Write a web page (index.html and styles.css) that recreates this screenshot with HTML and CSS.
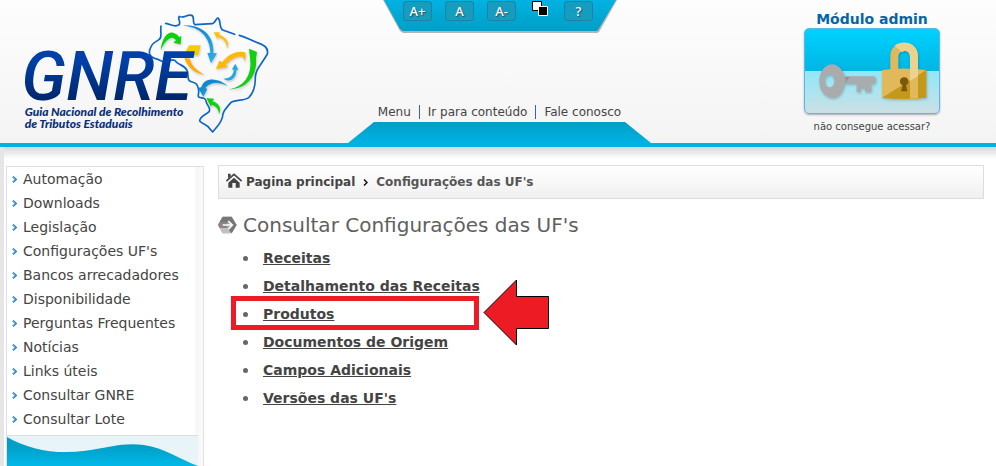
FILE: index.html
```html
<!DOCTYPE html>
<html lang="pt-BR">
<head>
  <meta charset="UTF-8" />
  <meta name="viewport" content="width=device-width, initial-scale=1.0"/>
  <title>GNRE - Configurações das UF's</title>
  <link rel="stylesheet" href="styles.css">
</head>
<body>
  <header class="header">
    <a class="logo" href="#" aria-label="GNRE">
      <svg width="280" height="140" viewBox="9 0 840 420">
        <defs>
          <linearGradient id="azul" x1="0" y1="0" x2="0" y2="1">
            <stop offset="0.3" stop-color="#0040a8"/>
            <stop offset="0.8" stop-color="#00256a"/>
          </linearGradient>
          <linearGradient id="ciano" x1="0" y1="0" x2="1" y2="1">
            <stop offset="0" stop-color="#0878c8"/>
            <stop offset="1" stop-color="#2bb5e8"/>
          </linearGradient>
          <linearGradient id="linha">
            <stop offset="0" stop-color="#1665b4" stop-opacity="0"/>
            <stop offset="0.5" stop-color="#1665b4"/>
            <stop offset="1" stop-color="#1665b4" stop-opacity="0"/>
          </linearGradient>
        </defs>
        <!-- mapa -->
        <g fill="none" stroke="#0d66c6" stroke-width="5" stroke-linecap="round" stroke-linejoin="round">
          <path d="M483 78 C480 100 488 112 477 119 C466 126 455 130 452 143 C444 158 449 171 464 175 C480 178 490 190 502 188 C512 180 521 174 531 188 C540 196 554 196 561 211 C568 222 559 237 570 244 C584 249 592 248 595 266 C599 278 592 286 596 291 C606 296 616 290 619 306 C620 316 632 320 628 334 C618 345 600 347 599 363 C608 374 622 373 629 386 L638 396 C648 382 668 368 669 341 C674 326 684 319 692 308 C710 297 732 304 747 292 C760 278 766 259 766 236 C764 210 785 193 802 162 C806 145 791 133 770 127 C751 120 737 111 718 106"/>
          <path d="M497 70 C512 72 520 82 534 76 C548 70 530 55 538 49 C550 57 560 42 575 46 C586 52 575 68 585 74 C604 73 620 72 637 71 C649 66 648 53 654 54 C664 62 656 81 668 90 L704 103"/>
        </g>
        <g class="sombra">
          <path fill="#08d508" d="M482 151 C486 110 505 95 519 98 C530 101 535 107 538 112 L544 107 L542 133 L520 128 L528 121 C516 102 496 120 482 151Z"/>
          <path fill="url(#ciano)" d="M548 77 C602 71 644 105 640 159 L651 160 L633 190 L622 159 L631 158 C630 112 600 79 548 77Z"/>
          <path fill="#ffc20a" d="M641 97 L660 97 L656 103 C675 111 692 125 681 146 C681 127 670 115 653 111 L654 120Z"/>
          <path fill="#f5cc08" d="M567 136 L602 136 L595 165 L568 166 L574 159 L558 153Z"/>
          <path fill="#ffac08" d="M553 173 L570 176 C573 197 593 213 615 225 C580 219 562 199 553 173Z"/>
          <path fill="#ffb709" d="M648 207 L658 182 L667 187 C681 165 714 149 737 158 L735 188 C735 155 696 171 677 195 L685 201Z"/>
          <path fill="#12cf12" d="M684 268 C728 263 758 229 750 174 L747 146 L771 156 L768 174 C773 227 741 269 684 268Z"/>
          <path fill="#25a8df" d="M669 235 C686 239 703 225 701 208 L695 209 L706 191 L715 209 L709 210 C710 235 688 251 669 235Z"/>
          <path fill="url(#ciano)" d="M684 258 C654 245 631 245 616 264 L622 267 L610 290 L594 263 L604 262 C611 232 653 231 684 258Z"/>
          <path fill="#12d012" d="M619 294 L642 296 L638 304 C656 310 666 324 657 342 C656 326 646 317 635 314 L633 321Z"/>
        </g>
        <text class="logo-nome" x="64" y="300">GNRE</text>
        <path d="M75 319 H560" stroke="url(#linha)" stroke-width="4"/>
        <text class="logo-texto" x="74" y="348">Guia Nacional de Recolhimento</text>
        <text class="logo-texto" x="74" y="385">de Tributos Estaduais</text>
      </svg>
    </a>

    <div class="centro">
      <div class="acessibilidade">
        <svg class="aba" viewBox="0 0 234 34" aria-hidden="true">
          <defs>
            <linearGradient id="aba" x1="0" y1="0" x2="0" y2="1">
              <stop offset="0" stop-color="#00b2e2"/>
              <stop offset="1" stop-color="#009fc5"/>
            </linearGradient>
          </defs>
          <path fill="#b3b3b3" d="M0 0 H234 L216 32 L214 33 H20 L17 31Z"/>
          <path fill="url(#aba)" d="M1 0 H233 L215 30 L213 31 H20 L17 29Z"/>
        </svg>
        <button type="button">A+</button>
        <button type="button">A</button>
        <button type="button">A-</button>
        <button type="button" class="contraste" aria-label="Contraste">
          <svg width="16" height="16" viewBox="0 0 16 16">
            <path fill="#fff" stroke="#000" d="M.5 .5h9v9h-9z"/>
            <path fill="#000" stroke="#fff" d="M6.500 5.500h9v9h-9z"/>
          </svg>
        </button>
        <button type="button">?</button>
      </div>
      <nav class="atalhos">
        <a href="#menu">Menu</a>
        <a href="#conteudo">Ir para conteúdo</a>
        <a href="#contato">Fale conosco</a>
      </nav>
      <div class="rampa"></div>
    </div>

    <div class="login">
      <a class="login-titulo" href="#">Módulo admin</a>
      <a class="login-botao" href="#" aria-label="Entrar">
        <svg width="134" height="84" viewBox="0 0 402 252">
          <g class="sombra">
            <path fill="#a9abad" fill-rule="evenodd" d="M82 106 C58 106 43 130 43 157 C43 184 60 207 82 207 C99 207 115 193 119 164 H155 V189 H167 V178 H180 V189 H199 V164 H205 Q213 164 213 153 Q213 142 205 142 H119 C113 121 98 106 82 106Z M74 137 C83 137 88 147 88 156 C88 166 83 175 74 175 C65 175 60 166 60 156 C60 147 65 137 74 137Z"/>
            <path fill="#929497" d="M121 144 H134 L121 162Z"/>
            <path fill="#dfb95d" d="M256 125 V82 C256 28 339 28 339 82 V125 H315 V84 C315 60 280 60 280 84 V125Z"/>
            <path fill="#ebd28e" d="M269 50 C290 32 339 38 339 82 V125 H315 V84 C315 65 300 60 291 70Z"/>
            <path fill="#e1b85a" d="M231 123 Q297 114 364 123 V206 Q297 214 231 206Z"/>
            <path fill="#c4981b" d="M364 123 V206 Q297 214 231 206Z"/>
            <path fill="#ebd28e" d="M315 119 H339 V143 L315 157Z"/>
            <path fill="#e1b85a" d="M315 157 L339 143 V208 L315 210Z"/>
            <path fill="#79580c" d="M298 145 C282 145 281 165 293 169 L288 187 H307 L303 169 C315 163 312 145 298 145Z"/>
          </g>
        </svg>
      </a>
      <a class="login-ajuda" href="#">não consegue acessar?</a>
    </div>
  </header>

  <div class="pagina">
    <aside class="lateral" id="menu">
      <nav class="menu">
        <ul>
          <li><a href="#">Automação</a></li>
          <li><a href="#">Downloads</a></li>
          <li><a href="#">Legislação</a></li>
          <li><a href="#">Configurações UF's</a></li>
          <li><a href="#">Bancos arrecadadores</a></li>
          <li><a href="#">Disponibilidade</a></li>
          <li><a href="#">Perguntas Frequentes</a></li>
          <li><a href="#">Notícias</a></li>
          <li><a href="#">Links úteis</a></li>
          <li><a href="#">Consultar GNRE</a></li>
          <li><a href="#">Consultar Lote</a></li>
        </ul>
        <svg class="onda" viewBox="0 0 573 93" preserveAspectRatio="none" aria-hidden="true">
          <defs>
            <linearGradient id="onda" x1="0" y1="0" x2="0" y2="1">
              <stop offset="0.3" stop-color="#009fc6"/>
              <stop offset="1" stop-color="#00b8e8"/>
            </linearGradient>
          </defs>
          <path fill="url(#onda)" d="M0 3 C65 42 145 58 235 46 C310 35 350 20 410 28 C475 38 510 68 573 93 H0Z"/>
        </svg>
      </nav>
    </aside>

    <main class="conteudo" id="conteudo">
      <nav class="trilha">
        <svg class="casa" width="16" height="15" viewBox="0 0 48 45" aria-hidden="true">
          <path fill="#444" d="M24 14 L41 29 V44 H29 V30 H19 V44 H7 V29Z"/>
          <path fill="none" stroke="#444" stroke-width="5" d="M1 24 L24 4 L47 24"/>
          <path fill="#444" d="M6 2 H14 V10 L6 16Z"/>
        </svg>
        <a href="#">Pagina principal</a>
        <svg class="seta" width="5" height="7" viewBox="0 0 5 7" aria-hidden="true">
          <path d="M1 0.500 L4 3.500 L1 6.500" fill="none" stroke="#111" stroke-width="1.500"/>
        </svg>
        <span>Configurações das UF's</span>
      </nav>

      <h1>
        <svg width="19" height="18" viewBox="0 0 57 54" aria-hidden="true">
          <path fill="#aaa" d="M14 2 H41 L56 27 L41 52 H14 L0 27Z"/>
          <path fill="#777" d="M14 2 H41 L27 20 H3Z"/>
          <path fill="#8c8583" d="M0 27 L3 20 H28 V36 H5Z"/>
          <path fill="#c2c0be" d="M5 36 H28 L41 52 H14Z"/>
          <path fill="#777" d="M41 2 L56 27 L41 52 L33 43 L47 27 L31 13Z"/>
          <path fill="none" stroke="#fff" stroke-width="4" d="M14 27 H42 M31 15 L43 27 L31 39"/>
        </svg>
        Consultar Configurações das UF's
      </h1>

      <ul class="opcoes">
        <li><a href="#">Receitas</a></li>
        <li><a href="#">Detalhamento das Receitas</a></li>
        <li class="destaque">
          <a href="#">Produtos</a>
          <svg class="flecha" width="66" height="67" viewBox="0 0 66 67" aria-hidden="true">
            <path fill="#ed1c24" stroke="#000" d="M1 33.500 L33.500 1 V17.500 H65.500 V49.500 H33.500 V66Z"/>
          </svg>
        </li>
        <li><a href="#">Documentos de Origem</a></li>
        <li><a href="#">Campos Adicionais</a></li>
        <li><a href="#">Versões das UF's</a></li>
      </ul>
    </main>
  </div>
</body>
</html>
```
FILE: styles.css
```css
*, *::before, *::after {
  box-sizing: border-box;
}
body {
  margin: 0;
  min-height: 100vh;
  display: flex;
  flex-direction: column;
  font-family: Verdana, "DejaVu Sans", sans-serif;
  font-size: 14px;
  color: #444;
  background: #e6e6e6;
}
a {
  color: #444;
  text-decoration: none;
}
ul {
  list-style: none;
  margin: 0;
  padding: 0;
}
svg {
  display: block;
  flex: none;
}

/* topo */
.header {
  display: grid;
  grid-template-columns: 1fr 303px 1fr;
  height: 147px;
  padding-left: 3px;
  background: linear-gradient(#fdfdfd, #f4f4f4);
  border-bottom: 4px solid #00b2e3;
}
.logo-nome {
  font-family: Roboto, sans-serif;
  font-size: 204px;
  font-style: italic;
  font-weight: 500;
  fill: url(#azul);
}
.logo-texto {
  font-family: Lato, sans-serif;
  font-size: 36px;
  font-style: italic;
  font-weight: 900;
  fill: #0a2f78;
}
.sombra {
  filter: drop-shadow(2px 4px 3px rgba(0,0,0,0.2));
}
.centro {
  display: flex;
  flex-direction: column;
  align-items: center;
}
.acessibilidade {
  position: relative;
  display: flex;
  justify-content: center;
  gap: 13px;
  width: 234px;
  height: 34px;
  padding: 1px 3px 0 0;
}
.aba {
  position: absolute;
  top: 0;
  left: 0;
  width: 100%;
}
.acessibilidade button {
  position: relative;
  width: 29px;
  height: 20px;
  padding: 0;
  font-family: "Noto Sans", sans-serif;
  font-size: 13px;
  line-height: 18px;
  font-weight: 500;
  color: #fff;
  text-shadow: 1px 1px 1px #345;
  background: #149dbf;
  border: 1px solid #227fa5;
  border-radius: 3px;
  cursor: pointer;
}
.acessibilidade .contraste {
  display: flex;
  justify-content: center;
  width: 22px;
  background: none;
  border: none;
}
.atalhos {
  display: flex;
  margin-top: auto;
  padding-bottom: 3px;
  font-size: 12px;
  line-height: 14px;
}
.atalhos a + a {
  margin-left: 8px;
  padding-left: 8px;
  border-left: 1px solid #3565a8;
}
.rampa {
  width: 100%;
  height: 21px;
  background: linear-gradient(#009fc6, #00b2e3);
  clip-path: polygon(26px 0, calc(100% - 26px) 0, 100% 100%, 0 100%);
}
.login {
  justify-self: end;
  display: flex;
  flex-direction: column;
  align-items: center;
  width: 136px;
  margin-right: 56px;
  padding-top: 10px;
}
.login-titulo {
  font-weight: bold;
  line-height: 18px;
  color: #0565a8;
}
.login-botao {
  width: 136px;
  height: 86px;
  border: 1px solid #58b9e8;
  border-radius: 5px;
  background: linear-gradient(#00d2ff, #00b5e3 50%, #91e7f8 50%, #cbe0e4);
  box-shadow: 0 1px 2px rgba(0,0,0,0.3);
}
.login-ajuda {
  margin-top: 6px;
  font-size: 10px;
  line-height: 14px;
}

/* corpo */
.pagina {
  flex: 1;
  display: flex;
  margin-left: 4px;
  background: linear-gradient(#d8d8d8, #fff 12px);
}
.lateral {
  display: flex;
  width: 200px;
  padding: 19px 0 0 2px;
}
.menu {
  flex: 1;
  border: 1px solid #e0e0e0;
  border-bottom: none;
  background: linear-gradient(to right, transparent 188px, #f5f5f5 189px, #fbfbfb);
}
.menu ul {
  padding: 0 0 4px 6px;
}
.menu li {
  display: flex;
  align-items: center;
  height: 24px;
}
.menu li::before {
  content: "";
  width: 5px;
  height: 5px;
  margin: 0 7px 0 -2px;
  border: solid #0874bd;
  border-width: 1px 1px 0 0;
  box-shadow: inset -1px 1px 0 #6fb0dc;
  transform: rotate(45deg);
}
.onda {
  width: 191px;
  height: 31px;
  border-top: 1px solid #d9dfe2;
  background: #e8f4f8;
}
.conteudo {
  flex: 1;
  padding: 18px 12px 0 14px;
}
.trilha {
  display: flex;
  align-items: center;
  height: 34px;
  padding-left: 7px;
  border: 1px solid #ddd;
  background: linear-gradient(#fff, #f0f0f0);
  font-size: 12px;
  font-weight: bold;
  color: #555;
}
.trilha .casa {
  margin-bottom: 4px;
}
.trilha a {
  margin-left: 4px;
}
.trilha .seta {
  margin: 0 8px;
}
h1 {
  display: flex;
  align-items: center;
  gap: 6px;
  margin: 12px 0 5px;
  font-size: 20px;
  line-height: 28px;
  font-weight: normal;
  color: #606060;
}
.opcoes li {
  display: flex;
  align-items: center;
  height: 28px;
  padding-left: 25px;
}
.opcoes li::before {
  content: "";
  width: 5px;
  height: 5px;
  margin-right: 15px;
  border-radius: 50%;
  background: #666;
}
.opcoes a {
  font-weight: bold;
  text-decoration: underline;
}
.opcoes .destaque {
  position: relative;
}
.destaque::after {
  content: "";
  position: absolute;
  top: -4px;
  left: 13px;
  width: 248px;
  height: 34px;
  border: 5px solid #ed1c24;
}
.flecha {
  position: absolute;
  top: -21px;
  left: 265px;
}
```
